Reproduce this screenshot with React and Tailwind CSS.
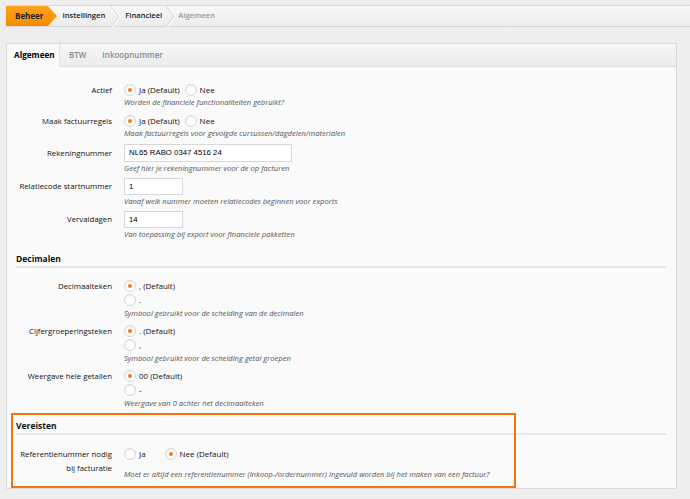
import React from "react";

const FONT = "font-['Open_Sans',sans-serif]";

function Radio({ checked }) {
  return (
    <span className="w-3 h-3 rounded-full border border-[#d6d6d6] bg-white shadow-[inset_0_1px_2px_rgba(0,0,0,0.08)] flex items-center justify-center shrink-0">
      {checked && <span className="w-[4px] h-[4px] rounded-full bg-[#f7760f]" />}
    </span>
  );
}

function Option({ checked, label }) {
  return (
    <span className="flex items-center gap-[3px] mr-[5px] h-[14px]">
      <Radio checked={checked} />
      {label && <span className="text-[8px] text-[#111] whitespace-nowrap">{label}</span>}
    </span>
  );
}

function Help({ children, className = "" }) {
  return (
    <p className={`text-[7.6px] italic leading-[11px] h-[11px] text-[#555] whitespace-nowrap ${className}`}>
      {children}
    </p>
  );
}

function Row({ label, labelLeading = "leading-[14px]", children, className = "" }) {
  return (
    <div className={`grid grid-cols-[97px_1fr] gap-x-3 ${className}`}>
      <div className={`text-right text-[7.8px] text-[#111] whitespace-nowrap ${labelLeading}`}>{label}</div>
      <div>{children}</div>
    </div>
  );
}

function Input({ value, w }) {
  return (
    <div
      className={`${w} border border-[#d8d8d8] bg-white px-[4px] flex items-center text-[7.8px] text-black font-['Liberation_Sans',sans-serif]`}
    >
      {value}
    </div>
  );
}

function Heading({ children, className = "" }) {
  return (
    <div className={`text-[8.5px] font-bold text-[#111] leading-[14px] border-b-2 border-[#e6e6e6] mr-[1px] ${className}`}>
      {children}
    </div>
  );
}

function Chevron() {
  return (
    <svg width="10" height="21" viewBox="0 0 10 21" className="shrink-0">
      <polyline points="1,0 9,10.5 1,21" fill="none" stroke="#ffffff" strokeWidth="1.5" transform="translate(1,0)" />
      <polyline points="1,0 9,10.5 1,21" fill="none" stroke="#d2d2d2" strokeWidth="1" />
    </svg>
  );
}

export default function App() {
  return (
    <div className={`w-[690px] h-[499px] bg-[#eeeeee] overflow-hidden ${FONT}`}>
      {/* breadcrumb */}
      <div className="ml-[6px] mt-[5px] h-[22px] flex items-center border-y border-[#d9d9d9] bg-gradient-to-b from-[#f8f8f8] to-[#ececec]">
        <div className="relative h-full flex items-center">
          <div className="h-full pl-[9px] pr-[5px] flex items-center bg-gradient-to-b from-[#ffa41c] to-[#f58a00] text-[8px] font-bold text-[#222]">
            Beheer
          </div>
          <svg width="9" height="20" viewBox="0 0 9 20" className="shrink-0">
            <defs>
              <linearGradient id="og" x1="0" y1="0" x2="0" y2="1">
                <stop offset="0" stopColor="#ffa41c" />
                <stop offset="1" stopColor="#f58a00" />
              </linearGradient>
            </defs>
            <polygon points="0,0 9,10 0,20" fill="url(#og)" />
          </svg>
        </div>
        <span className="ml-[5px] text-[7.6px] font-semibold text-[#222]">Instellingen</span>
        <span className="ml-[5px]"><Chevron /></span>
        <span className="ml-[5px] text-[7.6px] font-semibold text-[#222]">Financieel</span>
        <span className="ml-[3px]"><Chevron /></span>
        <span className="ml-[3px] text-[7.6px] font-semibold text-[#999]">Algemeen</span>
      </div>

      {/* panel */}
      <div className="relative ml-[6px] mt-[16px] w-[671px] h-[446px] border border-[#dadada] bg-[#fafafa]">
        <div className="h-[23px] flex items-stretch border-b border-[#e2e2e2] bg-gradient-to-b from-[#f7f7f7] to-[#ececec]">
          <div className="w-[53px] bg-[#fafafa] border-r border-[#e2e2e2] -mb-px flex items-center pl-[7px] text-[8.2px] font-bold text-black">
            Algemeen
          </div>
          <div className="flex items-center pl-[9px] text-[8px] font-semibold text-[#8a8a8a]">BTW</div>
          <div className="flex items-center pl-[16px] text-[8px] font-semibold text-[#8a8a8a]">Inkoopnummer</div>
        </div>

        <div className="pl-[8px] pr-[9px] pt-[16px]">
          <Row label="Actief">
            <div className="flex">
              <Option checked label="Ja (Default)" />
              <Option label="Nee" />
            </div>
            <Help>Worden de financiele functionaliteiten gebruikt?</Help>
          </Row>
          <Row label="Maak factuurregels" className="mt-[6px]">
            <div className="flex">
              <Option checked label="Ja (Default)" />
              <Option label="Nee" />
            </div>
            <Help>Maak factuurregels voor gevolgde cursussen/dagdelen/materialen</Help>
          </Row>
          <Row label="Rekeningnummer" labelLeading="leading-[18px]" className="mt-[5px]">
            <Input value="NL65 RABO 0347 4516 24" w="w-[168px] h-[18px]" />
            <Help className="mt-[1px]">Geef hier je rekeningnummer voor de op facturen</Help>
          </Row>
          <Row label="Relatiecode startnummer" labelLeading="leading-[17px]" className="mt-[4px]">
            <Input value="1" w="w-[59px] h-[17px]" />
            <Help className="mt-[1px]">Vanaf welk nummer moeten relatiecodes beginnen voor exports</Help>
          </Row>
          <Row label="Vervaldagen" labelLeading="leading-[17px]" className="mt-[4px]">
            <Input value="14" w="w-[59px] h-[17px]" />
            <Help className="mt-[1px]">Van toepassing bij export voor financiele pakketten</Help>
          </Row>

          <Heading className="mt-[12px] ml-[1px]">Decimalen</Heading>

          <Row label="Decimaalteken" className="mt-[11px]">
            <Option checked label=", (Default)" />
            <Option label="." />
            <Help className="mt-[1px]">Symbool gebruikt voor de scheiding van de decimalen</Help>
          </Row>
          <Row label="Cijfergroeperingsteken" className="mt-[5px]">
            <Option checked label=". (Default)" />
            <Option label="," />
            <Help className="mt-[1px]">Symbool gebruikt voor de scheiding getal groepen</Help>
          </Row>
          <Row label="Weergave hele getallen" className="mt-[5px]">
            <Option checked label="00 (Default)" />
            <Option label="-" />
            <Help className="mt-[1px]">Weergave van 0 achter het decimaalteken</Help>
          </Row>

          <Heading className="mt-[10px] ml-[1px]">Vereisten</Heading>

          <Row label={<>Referentienummer nodig<br />bij facturatie</>} labelLeading="leading-[14px]" className="mt-[12px]">
            <div className="flex">
              <Option label="Ja" />
              <span className="ml-[14px]"><Option checked label="Nee (Default)" /></span>
            </div>
            <Help className="mt-[8px]">
              Moet er altijd een referentienummer (inkoop-/ordernummer) ingevuld worden bij het maken van een factuur?
            </Help>
          </Row>
        </div>

        {/* highlight annotation */}
        <div className="absolute left-[4px] top-[369px] w-[505px] h-[75px] border-2 border-[#f9700f] pointer-events-none" />
      </div>
    </div>
  );
}
